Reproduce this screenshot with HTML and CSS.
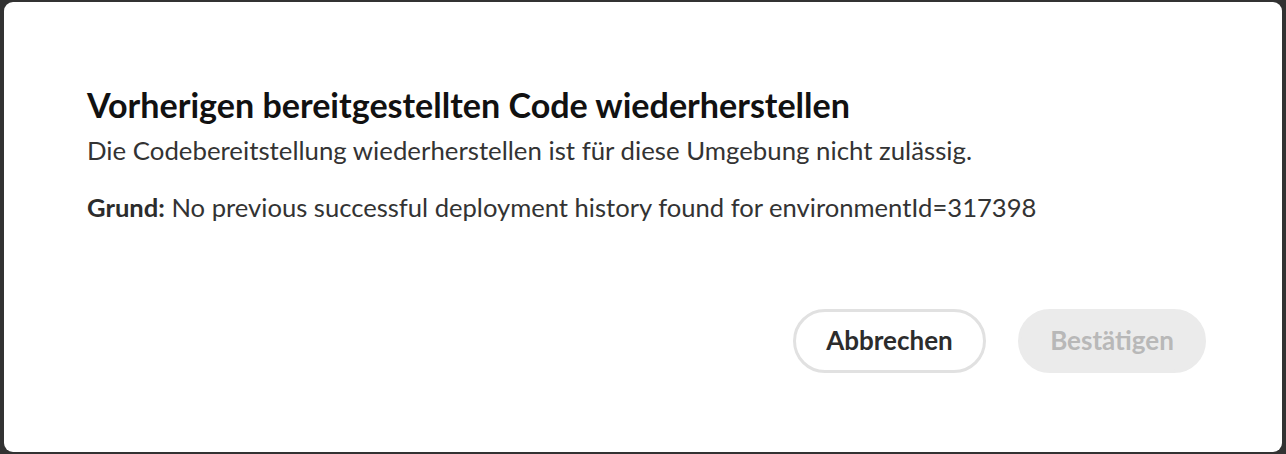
FILE: index.html
```html
<!DOCTYPE html>
<html lang="de">
<head>
<meta charset="utf-8">
<title>Vorherigen bereitgestellten Code wiederherstellen</title>
<link rel="stylesheet" href="styles.css">
</head>
<body>
<div class="backdrop">
  <section class="dialog" role="dialog" aria-labelledby="dlg-title">
    <h2 id="dlg-title" class="title">Vorherigen bereitgestellten Code wiederherstellen</h2>
    <p class="desc">Die Codebereitstellung wiederherstellen ist für diese Umgebung nicht zulässig.</p>
    <p class="reason"><strong>Grund:</strong> No previous successful deployment history found for environmentId=317398</p>
    <div class="actions">
      <button class="btn btn-secondary" type="button">Abbrechen</button>
      <button class="btn btn-primary" type="button" disabled>Bestätigen</button>
    </div>
  </section>
</div>
</body>
</html>
```
FILE: styles.css
```css
html, body {
  margin: 0;
  padding: 0;
  background: #323232;
}
.backdrop {
  width: 1286px;
  height: 454px;
  box-sizing: border-box;
  padding: 2px 4px 2px 4px;
}
.dialog {
  box-sizing: border-box;
  height: 450px;
  background: #fff;
  border-radius: 9px;
  padding: 83px 76px 0 83px;
  font-family: "Lato", "Open Sans", sans-serif;
  color: #222;
}
.title {
  margin: 0;
  font-size: 34.1px;
  font-weight: 700;
  line-height: 40px;
  color: #111;
  white-space: nowrap;
}
.desc {
  margin: 9px 0 0;
  font-size: 25.8px;
  line-height: 32px;
  color: #333;
  white-space: nowrap;
}
.reason {
  margin: 25px 0 0;
  font-size: 25.6px;
  line-height: 32px;
  color: #333;
  white-space: nowrap;
}
.reason strong {
  font-weight: 700;
  color: #2c2c2c;
}
.actions {
  display: flex;
  justify-content: flex-end;
  gap: 32px;
  margin-top: 86px;
}
.btn {
  height: 64px;
  box-sizing: border-box;
  border-radius: 32px;
  padding: 0 20px 3px;
  font-family: inherit;
  font-size: 26px;
  font-weight: 700;
}
.btn-secondary {
  background: #fff;
  border: 3px solid #e1e1e1;
  color: #2c2c2c;
  width: 193px;
}
.btn-primary {
  background: #ebebeb;
  border: 3px solid #ebebeb;
  color: #b8b8b8;
  width: 188px;
}
```
